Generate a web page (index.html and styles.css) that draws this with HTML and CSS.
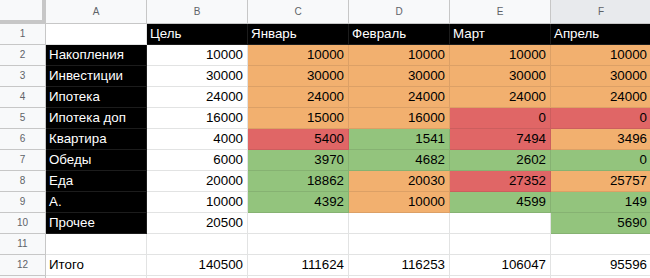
FILE: index.html
```html
<!DOCTYPE html>
<html>
<head>
<meta charset="utf-8">
<link rel="stylesheet" href="styles.css">
</head>
<body>
<table class="sheet">
  <colgroup>
    <col class="c-rh"><col class="c-d"><col class="c-d"><col class="c-d"><col class="c-d"><col class="c-d"><col class="c-d">
  </colgroup>
  <tr class="hdr">
    <th class="corner"></th><th>A</th><th>B</th><th>C</th><th>D</th><th>E</th><th class="sel">F</th>
  </tr>
  <tr><th class="rn">1</th><td></td><td class="k">Цель</td><td class="k">Январь</td><td class="k">Февраль</td><td class="k">Март</td><td class="k">Апрель</td></tr>
  <tr><th class="rn">2</th><td class="k">Накопления</td><td class="n">10000</td><td class="n o">10000</td><td class="n o">10000</td><td class="n o">10000</td><td class="n o">10000</td></tr>
  <tr><th class="rn">3</th><td class="k">Инвестиции</td><td class="n">30000</td><td class="n o">30000</td><td class="n o">30000</td><td class="n o">30000</td><td class="n o">30000</td></tr>
  <tr><th class="rn">4</th><td class="k">Ипотека</td><td class="n">24000</td><td class="n o">24000</td><td class="n o">24000</td><td class="n o">24000</td><td class="n o">24000</td></tr>
  <tr><th class="rn">5</th><td class="k">Ипотека доп</td><td class="n">16000</td><td class="n o">15000</td><td class="n o">16000</td><td class="n r">0</td><td class="n r">0</td></tr>
  <tr><th class="rn">6</th><td class="k">Квартира</td><td class="n">4000</td><td class="n r">5400</td><td class="n g">1541</td><td class="n r">7494</td><td class="n o">3496</td></tr>
  <tr><th class="rn">7</th><td class="k">Обеды</td><td class="n">6000</td><td class="n g">3970</td><td class="n g">4682</td><td class="n g">2602</td><td class="n g">0</td></tr>
  <tr><th class="rn">8</th><td class="k">Еда</td><td class="n">20000</td><td class="n g">18862</td><td class="n o">20030</td><td class="n r">27352</td><td class="n o">25757</td></tr>
  <tr><th class="rn">9</th><td class="k">А.</td><td class="n">10000</td><td class="n g">4392</td><td class="n o">10000</td><td class="n g">4599</td><td class="n g">149</td></tr>
  <tr><th class="rn">10</th><td class="k">Прочее</td><td class="n">20500</td><td></td><td></td><td></td><td class="n g">5690</td></tr>
  <tr><th class="rn">11</th><td></td><td></td><td></td><td></td><td></td><td></td></tr>
  <tr><th class="rn">12</th><td>Итого</td><td class="n">140500</td><td class="n">111624</td><td class="n">116253</td><td class="n">106047</td><td class="n">95596</td></tr>
  <tr><th class="rn"></th><td></td><td></td><td></td><td></td><td></td><td></td></tr>
</table>
</body>
</html>
```
FILE: styles.css
```css
html, body {
  margin: 0;
  padding: 0;
  background: #ffffff;
  overflow: hidden;
}

.sheet {
  border-collapse: separate;
  border-spacing: 0;
  table-layout: fixed;
  width: 652px;
  font-family: "Liberation Sans", Arial, sans-serif;
  font-size: 13.33px;
  color: #000000;
}

.c-rh { width: 46px; }
.c-d { width: 101px; }

.sheet th,
.sheet td {
  box-sizing: border-box;
  height: 21px;
  padding: 0 3px 2px 3px;
  border-right: 1px solid #e2e3e3;
  border-bottom: 1px solid #e2e3e3;
  vertical-align: bottom;
  white-space: nowrap;
  overflow: hidden;
  line-height: 16px;
  text-align: left;
  font-weight: normal;
}

.hdr th {
  height: 24px;
  background: #f8f9fa;
  color: #5f6368;
  font-family: "Liberation Sans", Arial, sans-serif;
  font-size: 10px;
  text-align: center;
  vertical-align: middle;
  padding: 0;
  border-right: 1px solid #c7c7c7;
  border-bottom: 1px solid #c7c7c7;
}

.hdr th.sel {
  background: #e8eaed;
}

.hdr th.corner {
  background: #f8f9fa;
  border-right: 4px solid #c7c7c7;
  border-bottom: 4px solid #c7c7c7;
}

.sheet th.rn {
  background: #f8f9fa;
  color: #5f6368;
  font-size: 10px;
  text-align: center;
  vertical-align: middle;
  padding: 0;
  border-right: 1px solid #c7c7c7;
  border-bottom: 1px solid #c7c7c7;
}

.sheet td.n { text-align: right; padding-right: 4px; }

.sheet td.k {
  background: #000000;
  color: #ffffff;
  border-color: #1c1c1c;
}

.sheet td.o {
  background: #f2b06f;
  border-color: #dca066;
}

.sheet td.r {
  background: #e06666;
  border-color: #cc5e5e;
}

.sheet td.g {
  background: #93c47d;
  border-color: #86b272;
}
```
